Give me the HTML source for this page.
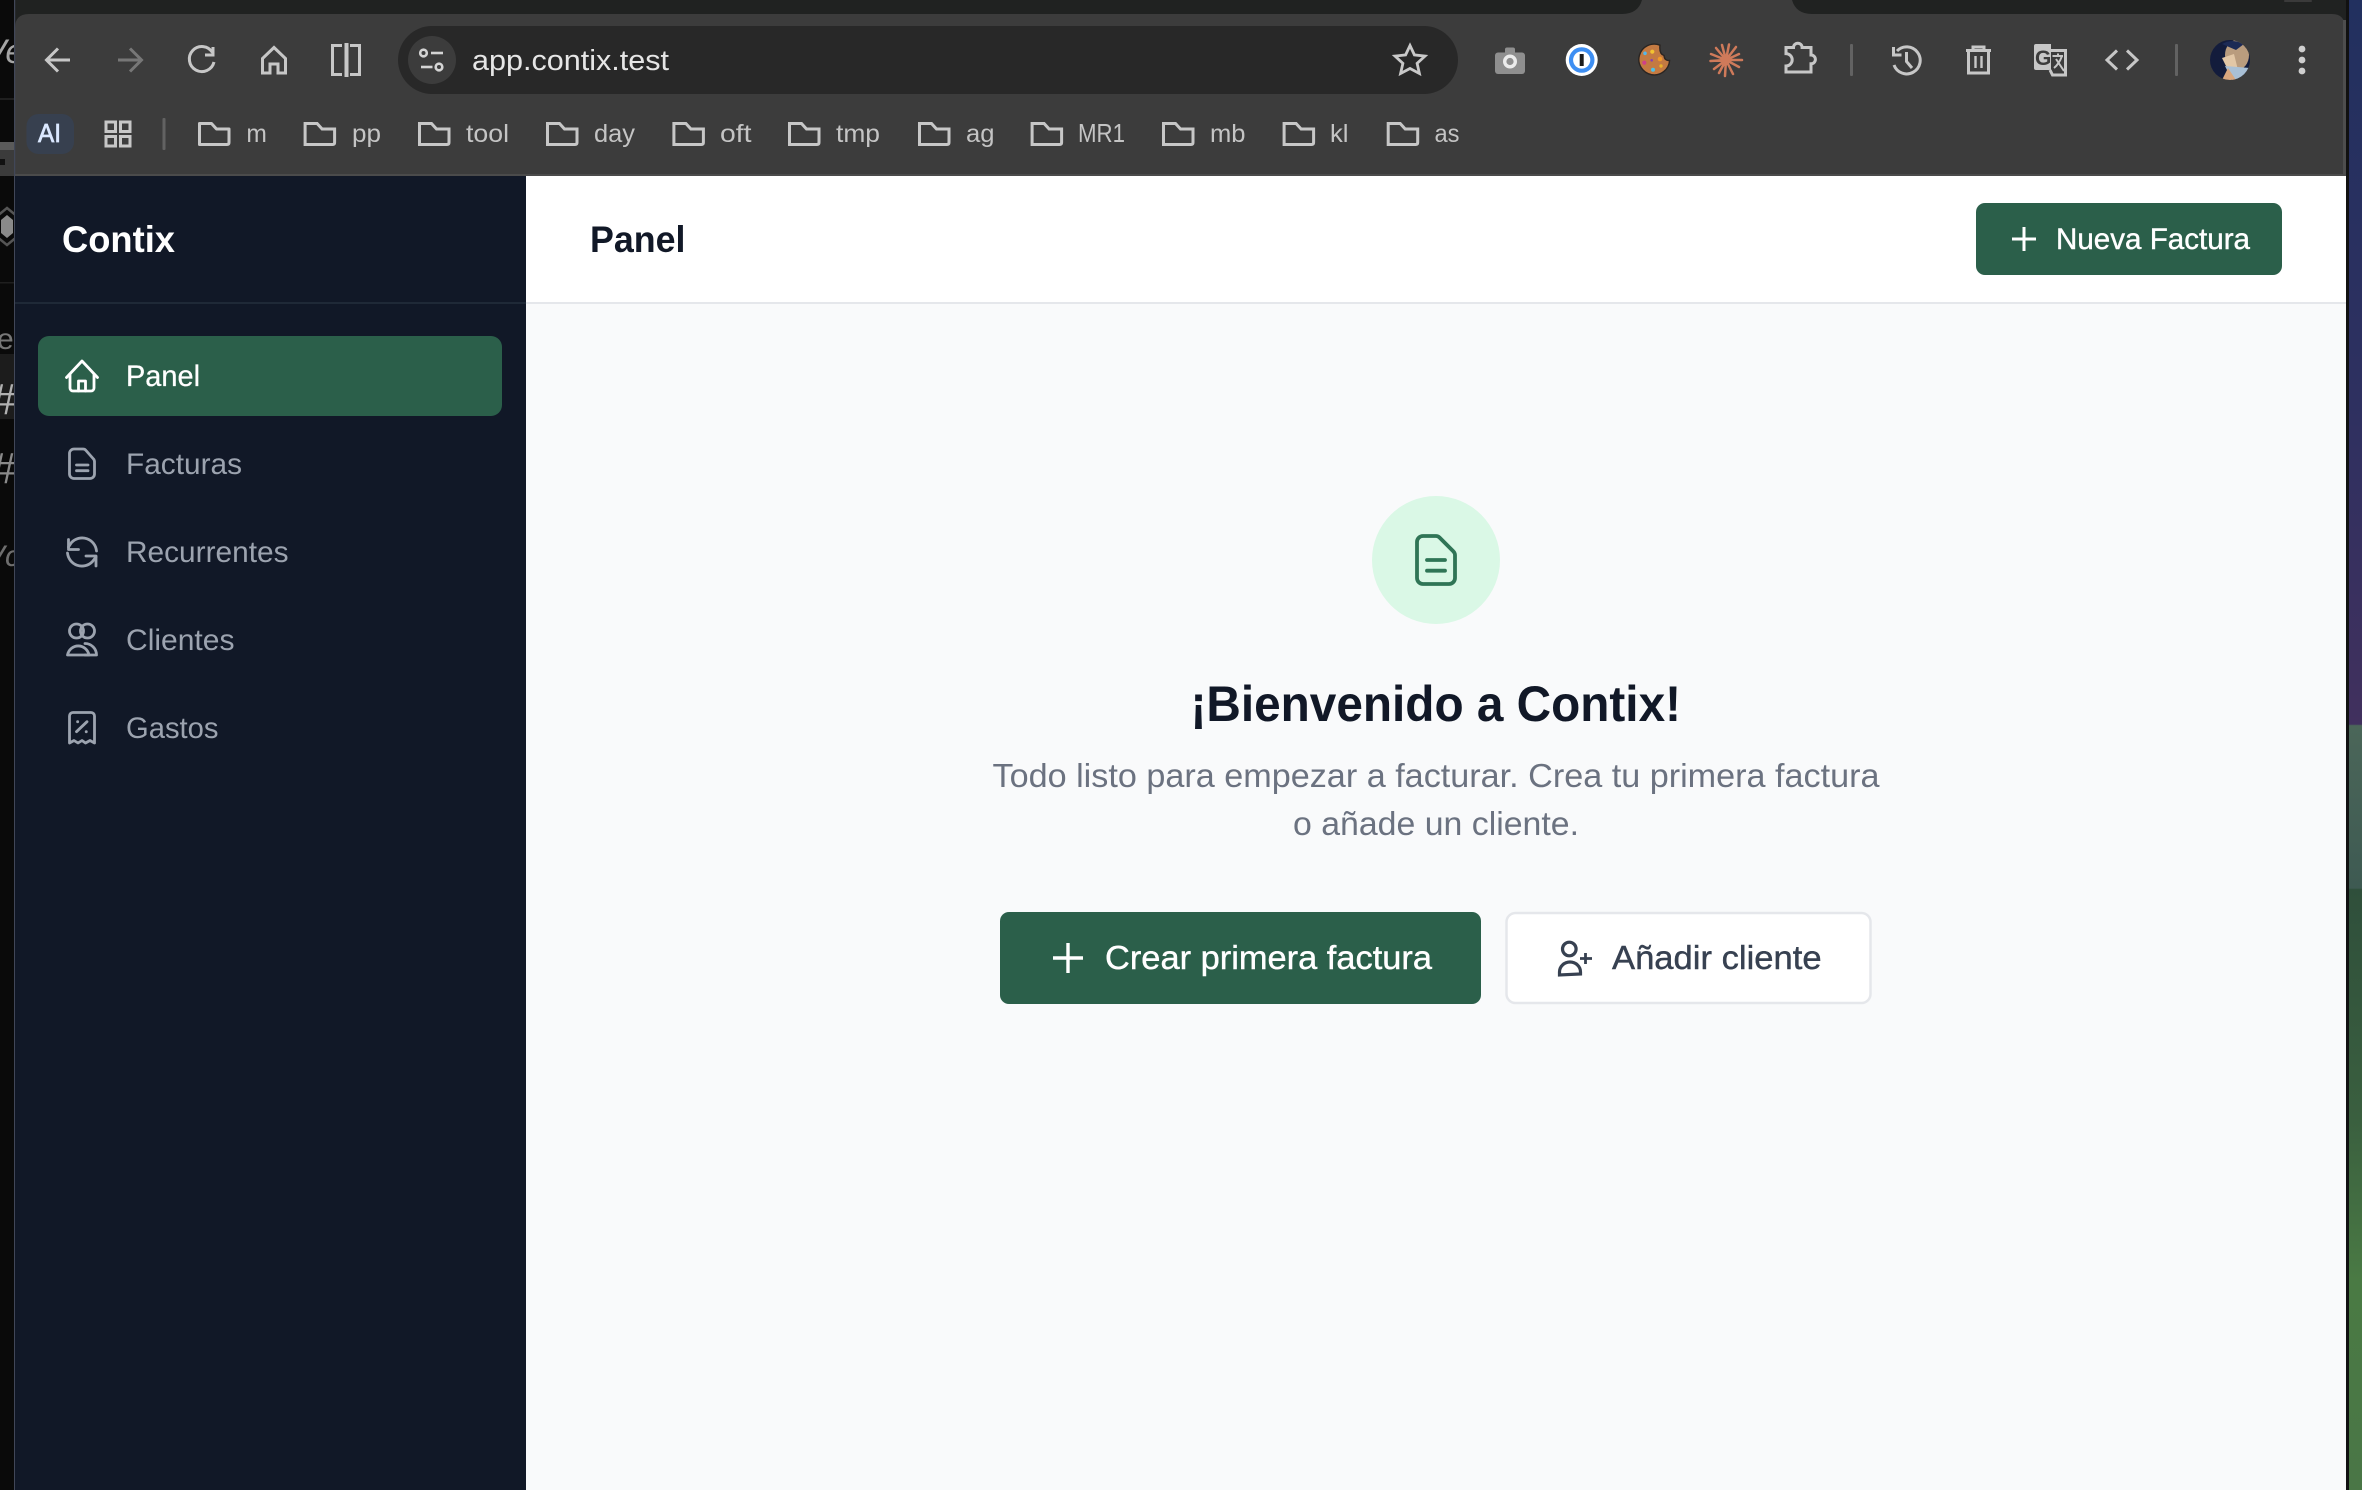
<!DOCTYPE html>
<html lang="es">
<head>
<meta charset="utf-8">
<title>Contix</title>
<style>
html,body{margin:0;padding:0;background:#0a0a0a;width:2362px;height:1490px;overflow:hidden}
svg{display:block}
text{font-family:"Liberation Sans",Arial,sans-serif}
</style>
</head>
<body>
<svg xmlns="http://www.w3.org/2000/svg" width="2362" height="1490" viewBox="0 0 2362 1490">
<defs>
<linearGradient id="wall" x1="0" y1="0" x2="0" y2="1">
<stop offset="0" stop-color="#22305f"/><stop offset=".27" stop-color="#2e3060"/><stop offset=".486" stop-color="#41305e"/>
<stop offset=".487" stop-color="#4b6659"/><stop offset=".596" stop-color="#3e5a52"/><stop offset=".597" stop-color="#2f4f3b"/>
<stop offset=".75" stop-color="#3a5f3f"/><stop offset=".86" stop-color="#4a7a44"/><stop offset="1" stop-color="#4a7646"/>
</linearGradient>
<clipPath id="leftclip"><rect x="0" y="0" width="14" height="1490"/></clipPath>
<clipPath id="avclip"><circle cx="2230" cy="60" r="20"/></clipPath>
</defs>

<!-- backdrop -->
<rect width="2362" height="1490" fill="#0a0a0a"/>
<rect x="2349" y="0" width="13" height="1490" fill="url(#wall)"/>
<rect x="2346" y="0" width="3" height="1490" fill="#111"/>

<!-- left strip behind window -->
<g clip-path="url(#leftclip)">
<text x="-16" y="63" font-size="34" font-style="italic" fill="#a5a5a5">Ve</text>
<rect x="0" y="98" width="14" height="2" fill="#1f1f1f"/>
<rect x="0" y="142" width="14" height="8" fill="#5a5a5a"/>
<rect x="0" y="150" width="14" height="26" fill="#3b3b3b"/>
<rect x="0" y="159" width="5" height="6" fill="#111"/>
<polygon points="7,208 18,217 18,236 7,245 -4,236 -4,217" fill="none" stroke="#555" stroke-width="2.5"/>
<polygon points="7,215 13,220 13,233 7,238 1,233 1,220" fill="#8a8a8a"/>
<rect x="0" y="282" width="14" height="1.5" fill="#1f1f1f"/>
<text x="-3" y="349" font-size="30" fill="#777">e</text>
<rect x="0" y="354" width="14" height="65" fill="#1c1c1c"/>
<text x="-9" y="414" font-size="44" font-style="italic" fill="#b0b0b0">#</text>
<text x="-9" y="483" font-size="44" font-style="italic" fill="#8a8a8a">#</text>
<text x="-15" y="566" font-size="30" font-style="italic" fill="#6e6e6e">Vc</text>
</g>

<!-- window frame -->
<rect x="14" y="0" width="2332" height="176" fill="#202221"/>
<path d="M1642 0 H1792 Q1796 14 1812 14 H1622 Q1638 14 1642 0 Z" fill="#3c3c3c"/>
<rect x="2284" y="0" width="28" height="2" rx="1" fill="#3a3a3a"/>
<path d="M15 176 V28 Q15 14 29 14 H2332 Q2345 14 2345 28 V176 Z" fill="#3c3c3c"/>
<rect x="2343" y="20" width="3" height="156" fill="#4e4e4e"/>
<rect x="15" y="174" width="2330" height="2" fill="#4b4b4b"/>
<rect x="14" y="0" width="1.2" height="1490" fill="#414758"/>

<!-- nav buttons -->
<g fill="none" stroke="#c7c7c7" stroke-width="3">
<path d="M70 60 H48 M58 48.5 L46.5 60 L58 71.5"/>
<path d="M118 60 H140 M130 48.5 L141.5 60 L130 71.5" stroke="#777"/>
<path d="M212.5 52.5 A12.5 12.5 0 1 0 214 62"/>
<path d="M213 47 V55 H205"/>
<path d="M274 47.5 L262.5 58.5 V73 H270 V64 H278 V73 H285.5 V58.5 Z"/>
<path d="M342 45.5 H332.5 V74.5 H342"/>
<path d="M350 45.5 H359.5 V74.5 H350"/>
<path d="M346.5 43 V77" stroke-width="4"/>
</g>

<!-- omnibox -->
<rect x="398" y="26" width="1060" height="68" rx="34" fill="#282828"/>
<circle cx="432" cy="60" r="24" fill="#3c3c3c"/>
<g fill="none" stroke="#d4d4d4" stroke-width="2.6">
<circle cx="423.5" cy="53" r="3.3"/><path d="M431 53 H443"/>
<path d="M421 67 H432.5"/><circle cx="439" cy="67" r="3.3"/>
</g>
<text x="472" y="70" font-size="29" fill="#e6e6e6" textLength="197" lengthAdjust="spacingAndGlyphs">app.contix.test</text>
<polygon points="1410,45.5 1414.4,54.9 1425,56.1 1417.1,63.3 1419.4,73.5 1410,68.5 1400.6,73.5 1402.9,63.3 1395,56.1 1405.6,54.9" fill="none" stroke="#c9c9c9" stroke-width="2.8" stroke-linejoin="miter"/>

<!-- extensions -->
<g>
<rect x="1495" y="52.5" width="30" height="21.5" rx="3" fill="#8f8f8f"/>
<rect x="1505" y="47.5" width="10" height="8" rx="2" fill="#8f8f8f"/>
<circle cx="1510" cy="61.5" r="5.3" fill="none" stroke="#ececec" stroke-width="3.4"/>
<circle cx="1581.7" cy="60" r="16" fill="#fff"/>
<circle cx="1581.7" cy="60" r="12.8" fill="#3d8ef2"/>
<circle cx="1581.7" cy="60" r="8.6" fill="#fff"/>
<rect x="1579.7" y="54" width="4" height="12" fill="#1c1c1c"/>
<path d="M1660 45.2 A15.4 15.4 0 1 0 1669.6 60.5 Q1664.5 61 1664 55.5 Q1659 54 1660 45.2 Z" fill="#c47a42" stroke="#2a2522" stroke-width="1.4"/>
<circle cx="1645" cy="53.3" r="1.8" fill="#55b7e8"/><circle cx="1652.3" cy="51.7" r="2.1" fill="#f2c230"/>
<circle cx="1660" cy="59" r="2.3" fill="#f0992c"/><circle cx="1644.3" cy="62.7" r="2.1" fill="#d0408a"/>
<circle cx="1651.7" cy="60.3" r="1.3" fill="#8a3fb0"/><circle cx="1661" cy="66" r="1.7" fill="#e9b22a"/>
<circle cx="1653" cy="69.7" r="2" fill="#4cc2e8"/>
<g stroke="#cf7a5a" stroke-width="2.5" stroke-linecap="round" fill="none">
<path d="M1726 60 L1742 60 M1726 60 L1739 54 M1726 60 L1736 47 M1726 60 L1729 44.5 M1726 60 L1722 45 M1726 60 L1716 48 M1726 60 L1711 54 M1726 60 L1710.5 61 M1726 60 L1714 69 M1726 60 L1719 73 M1726 60 L1725 76 M1726 60 L1733 74 M1726 60 L1739 67"/>
</g>
<path d="M1786 47.5 H1793.5 a4.3 4.3 0 0 1 8.6 0 H1811 V55 a4.4 4.4 0 0 1 0 8.8 V72 H1786 V66 a6 6 0 0 0 0-12.4 Z" fill="none" stroke="#c7c7c7" stroke-width="3"/>
</g>
<rect x="1850" y="44" width="3" height="32" rx="1" fill="#626262"/>
<g fill="none" stroke="#c7c7c7" stroke-width="3">
<path d="M1897 51 A13.5 13.5 0 1 1 1894 65"/>
<path d="M1893.5 47 V55 H1901.5"/>
<path d="M1906.5 52 V61.5 L1912 68"/>
<path d="M1973 49 V47 H1984 V49"/>
<path d="M1966 50.5 H1991"/>
<path d="M1968.5 50.5 V73 H1988.5 V50.5"/>
<path d="M1975.5 56 V68 M1981.5 56 V68" stroke-width="2.4"/>
<path d="M2050 50.5 H2065.5 V75 H2052.5 L2050 70"/>
<path d="M2117 50.5 L2107 60 L2117 69.5 M2127 50.5 L2137 60 L2127 69.5"/>
</g>
<rect x="2034" y="44" width="17" height="26" rx="2" fill="#c7c7c7"/>
<path d="M2042 44 H2051 V70 H2050 L2046 50 Z" fill="#c7c7c7"/>
<text x="2035" y="65" font-size="21" font-weight="bold" fill="#3c3c3c">G</text>
<path d="M2052.5 56 H2063 M2058 53.5 V56 M2062 56 Q2059 64 2054 68 M2056 59 L2064 71" fill="none" stroke="#c7c7c7" stroke-width="2"/>
<rect x="2175" y="44" width="3" height="32" rx="1" fill="#626262"/>
<g clip-path="url(#avclip)">
<rect x="2210" y="40" width="40" height="40" fill="#131c3c"/>
<ellipse cx="2237" cy="55" rx="12" ry="15" fill="#b99c7e"/>
<path d="M2222 44 Q2232 38 2244 44 L2236 50 Z" fill="#1c2a55"/>
<path d="M2222 58 L2234 54 L2238 70 L2226 66 Z" fill="#e2c7a6"/>
<path d="M2225 66 L2250 68 V80 H2232 Z" fill="#a9c0d6"/>
<path d="M2222 80 L2228 68 L2236 80 Z" fill="#d9a77e"/>
</g>
<circle cx="2302" cy="49" r="3.4" fill="#cfcfcf"/><circle cx="2302" cy="60" r="3.4" fill="#cfcfcf"/><circle cx="2302" cy="71" r="3.4" fill="#cfcfcf"/>

<!-- bookmarks -->
<rect x="26.5" y="114" width="47.5" height="40" rx="12" fill="#37404f"/>
<text x="38" y="142" font-size="26" fill="#dbe8ff" stroke="#dbe8ff" stroke-width=".7" textLength="23" lengthAdjust="spacingAndGlyphs">AI</text>
<g fill="none" stroke="#c7c7c7" stroke-width="3">
<rect x="106" y="122" width="9.5" height="9.5"/><rect x="120.5" y="122" width="9.5" height="9.5"/>
<rect x="106" y="136.5" width="9.5" height="9.5"/><rect x="120.5" y="136.5" width="9.5" height="9.5"/>
</g>
<rect x="162.5" y="118" width="3" height="32" rx="1" fill="#626262"/>
<g fill="none" stroke="#c7c7c7" stroke-width="3">
<path d="M199.5 144.5 V123.5 H211.5 L216.5 129 H229 V142.5 Q229 144.5 227 144.5 Z" stroke-linejoin="round"/>
<path transform="translate(105.6 0)" d="M199.5 144.5 V123.5 H211.5 L216.5 129 H229 V142.5 Q229 144.5 227 144.5 Z"/>
<path transform="translate(220 0)" d="M199.5 144.5 V123.5 H211.5 L216.5 129 H229 V142.5 Q229 144.5 227 144.5 Z"/>
<path transform="translate(348 0)" d="M199.5 144.5 V123.5 H211.5 L216.5 129 H229 V142.5 Q229 144.5 227 144.5 Z"/>
<path transform="translate(474.4 0)" d="M199.5 144.5 V123.5 H211.5 L216.5 129 H229 V142.5 Q229 144.5 227 144.5 Z"/>
<path transform="translate(590 0)" d="M199.5 144.5 V123.5 H211.5 L216.5 129 H229 V142.5 Q229 144.5 227 144.5 Z"/>
<path transform="translate(720 0)" d="M199.5 144.5 V123.5 H211.5 L216.5 129 H229 V142.5 Q229 144.5 227 144.5 Z"/>
<path transform="translate(832.6 0)" d="M199.5 144.5 V123.5 H211.5 L216.5 129 H229 V142.5 Q229 144.5 227 144.5 Z"/>
<path transform="translate(964 0)" d="M199.5 144.5 V123.5 H211.5 L216.5 129 H229 V142.5 Q229 144.5 227 144.5 Z"/>
<path transform="translate(1084.6 0)" d="M199.5 144.5 V123.5 H211.5 L216.5 129 H229 V142.5 Q229 144.5 227 144.5 Z"/>
<path transform="translate(1188.7 0)" d="M199.5 144.5 V123.5 H211.5 L216.5 129 H229 V142.5 Q229 144.5 227 144.5 Z"/>
</g>
<g font-size="25" fill="#c4c4c4">
<text x="246.4" y="142" textLength="20.5" lengthAdjust="spacingAndGlyphs">m</text>
<text x="352" y="142" textLength="29" lengthAdjust="spacingAndGlyphs">pp</text>
<text x="466" y="142" textLength="43" lengthAdjust="spacingAndGlyphs">tool</text>
<text x="594" y="142" textLength="41" lengthAdjust="spacingAndGlyphs">day</text>
<text x="720" y="142" textLength="31.5" lengthAdjust="spacingAndGlyphs">oft</text>
<text x="836" y="142" textLength="44" lengthAdjust="spacingAndGlyphs">tmp</text>
<text x="966" y="142" textLength="28.5" lengthAdjust="spacingAndGlyphs">ag</text>
<text x="1078" y="142" font-size="26" textLength="47" lengthAdjust="spacingAndGlyphs">MR1</text>
<text x="1210" y="142" textLength="35.5" lengthAdjust="spacingAndGlyphs">mb</text>
<text x="1330" y="142" textLength="18.5" lengthAdjust="spacingAndGlyphs">kl</text>
<text x="1434.5" y="142" textLength="25" lengthAdjust="spacingAndGlyphs">as</text>
</g>

<!-- sidebar -->
<rect x="15" y="176" width="511" height="1314" fill="#111827"/>
<rect x="15" y="302" width="511" height="2" fill="#1f2937"/>
<text x="62" y="252" font-size="37" font-weight="bold" fill="#fff" textLength="113" lengthAdjust="spacingAndGlyphs">Contix</text>
<rect x="38" y="336" width="464" height="80" rx="11" fill="#2b5f4a"/>
<g fill="none" stroke="#fff" stroke-width="2.8" stroke-linejoin="round" stroke-linecap="round">
<path d="M66.5 377.5 L82 361 L97.5 377.5"/>
<path d="M70 374 V388 a3 3 0 0 0 3 3 H91 a3 3 0 0 0 3-3 V374"/>
<path d="M78.5 391 V381 H85.5 V391"/>
</g>
<text x="126" y="386" font-size="29.5" fill="#fff" stroke="#fff" stroke-width=".25" textLength="74" lengthAdjust="spacingAndGlyphs">Panel</text>
<g fill="none" stroke="#9ca3af" stroke-width="2.8" stroke-linejoin="round" stroke-linecap="round">
<path d="M74 449 H83 Q85 449 86 450.5 L93.5 459 Q94.5 460 94.5 462 V474 a4.5 4.5 0 0 1 -4.5 4.5 H74 a4.5 4.5 0 0 1 -4.5-4.5 V453.5 a4.5 4.5 0 0 1 4.5-4.5 Z"/>
<path d="M76.5 465 H88 M76.5 470.7 H88"/>
<path d="M96.5 551 A14.5 14.5 0 0 0 71.5 542.5 L68.5 547"/>
<path d="M68.5 539.5 V549.5 H78.5"/>
<path d="M67.5 553 A14.5 14.5 0 0 0 92.5 561.5 L96 557"/>
<path d="M96 566 V556 H86"/>
<circle cx="76.5" cy="631" r="7"/><circle cx="87.5" cy="631" r="7"/>
<path d="M67.5 655 a11 11.5 0 0 1 21.5 0 Z"/>
<path d="M85 643.5 a11.5 11.5 0 0 1 11.5 11.5 H85"/>
<path d="M69.5 743 V716 a3.5 3.5 0 0 1 3.5-3.5 H91 a3.5 3.5 0 0 1 3.5 3.5 V743 L90 740.5 L85.5 743 L82 740.5 L78 743 L74 740.5 Z"/>
<path d="M76.5 731.7 L87 721.7"/>
<path d="M77.6 721.7 h.1 M86.2 731.7 h.1"/>
</g>
<g font-size="29.5" fill="#9ca3af">
<text x="126" y="474" textLength="116" lengthAdjust="spacingAndGlyphs">Facturas</text>
<text x="126" y="562" textLength="162.5" lengthAdjust="spacingAndGlyphs">Recurrentes</text>
<text x="126" y="650" textLength="108.5" lengthAdjust="spacingAndGlyphs">Clientes</text>
<text x="126" y="738" textLength="92.5" lengthAdjust="spacingAndGlyphs">Gastos</text>
</g>

<!-- main -->
<rect x="526" y="176" width="1820" height="1314" fill="#f9fafb"/>
<rect x="526" y="176" width="1820" height="126" fill="#fff"/>
<rect x="526" y="302" width="1820" height="2" fill="#e5e7eb"/>
<text x="590" y="252" font-size="37" font-weight="bold" fill="#111827" textLength="95.5" lengthAdjust="spacingAndGlyphs">Panel</text>
<rect x="1976" y="203" width="306" height="72" rx="9" fill="#2b5f4a"/>
<path d="M2024 227 V251 M2012 239 H2036" stroke="#fff" stroke-width="3" fill="none"/>
<text x="2056" y="249" font-size="29.5" fill="#fff" stroke="#fff" stroke-width=".4" textLength="194" lengthAdjust="spacingAndGlyphs">Nueva Factura</text>

<circle cx="1436" cy="560" r="64" fill="#daf8e6"/>
<g fill="none" stroke="#2f7556" stroke-width="3.8" stroke-linejoin="round" stroke-linecap="round">
<path d="M1423 536 H1436 Q1438 536 1439.5 537.5 L1453 551 Q1455 553 1455 555 V578 a6 6 0 0 1 -6 6 H1423 a6 6 0 0 1 -6-6 V542 a6 6 0 0 1 6-6 Z"/>
<path d="M1427 560 H1445 M1427 570.7 H1445"/>
</g>
<text x="1190.5" y="721" font-size="50" font-weight="bold" fill="#111827" textLength="490.5" lengthAdjust="spacingAndGlyphs">¡Bienvenido a Contix!</text>
<text x="992.5" y="787" font-size="33" fill="#6b7280" textLength="887" lengthAdjust="spacingAndGlyphs">Todo listo para empezar a facturar. Crea tu primera factura</text>
<text x="1293" y="835" font-size="33" fill="#6b7280" textLength="286" lengthAdjust="spacingAndGlyphs">o añade un cliente.</text>

<rect x="1000" y="912" width="481" height="92" rx="9" fill="#2b5f4a"/>
<path d="M1068 943 V973 M1053 958 H1083" stroke="#fff" stroke-width="3.4" fill="none"/>
<text x="1105" y="969" font-size="33" fill="#fff" stroke="#fff" stroke-width=".4" textLength="327" lengthAdjust="spacingAndGlyphs">Crear primera factura</text>
<rect x="1506.5" y="913" width="364" height="90" rx="9" fill="#fff" stroke="#e5e7eb" stroke-width="2.5"/>
<g fill="none" stroke="#374151" stroke-width="3.2">
<circle cx="1569.3" cy="949" r="6.8"/>
<path d="M1559.5 975 V972 a10.5 10 0 0 1 21 0 V974 Z"/>
<path d="M1585.5 953 V964 M1580 958.5 H1592" stroke-width="2.8"/>
</g>
<text x="1612" y="969" font-size="33" fill="#374151" stroke="#374151" stroke-width=".4" textLength="209.6" lengthAdjust="spacingAndGlyphs">Añadir cliente</text>
</svg>
</body>
</html>
